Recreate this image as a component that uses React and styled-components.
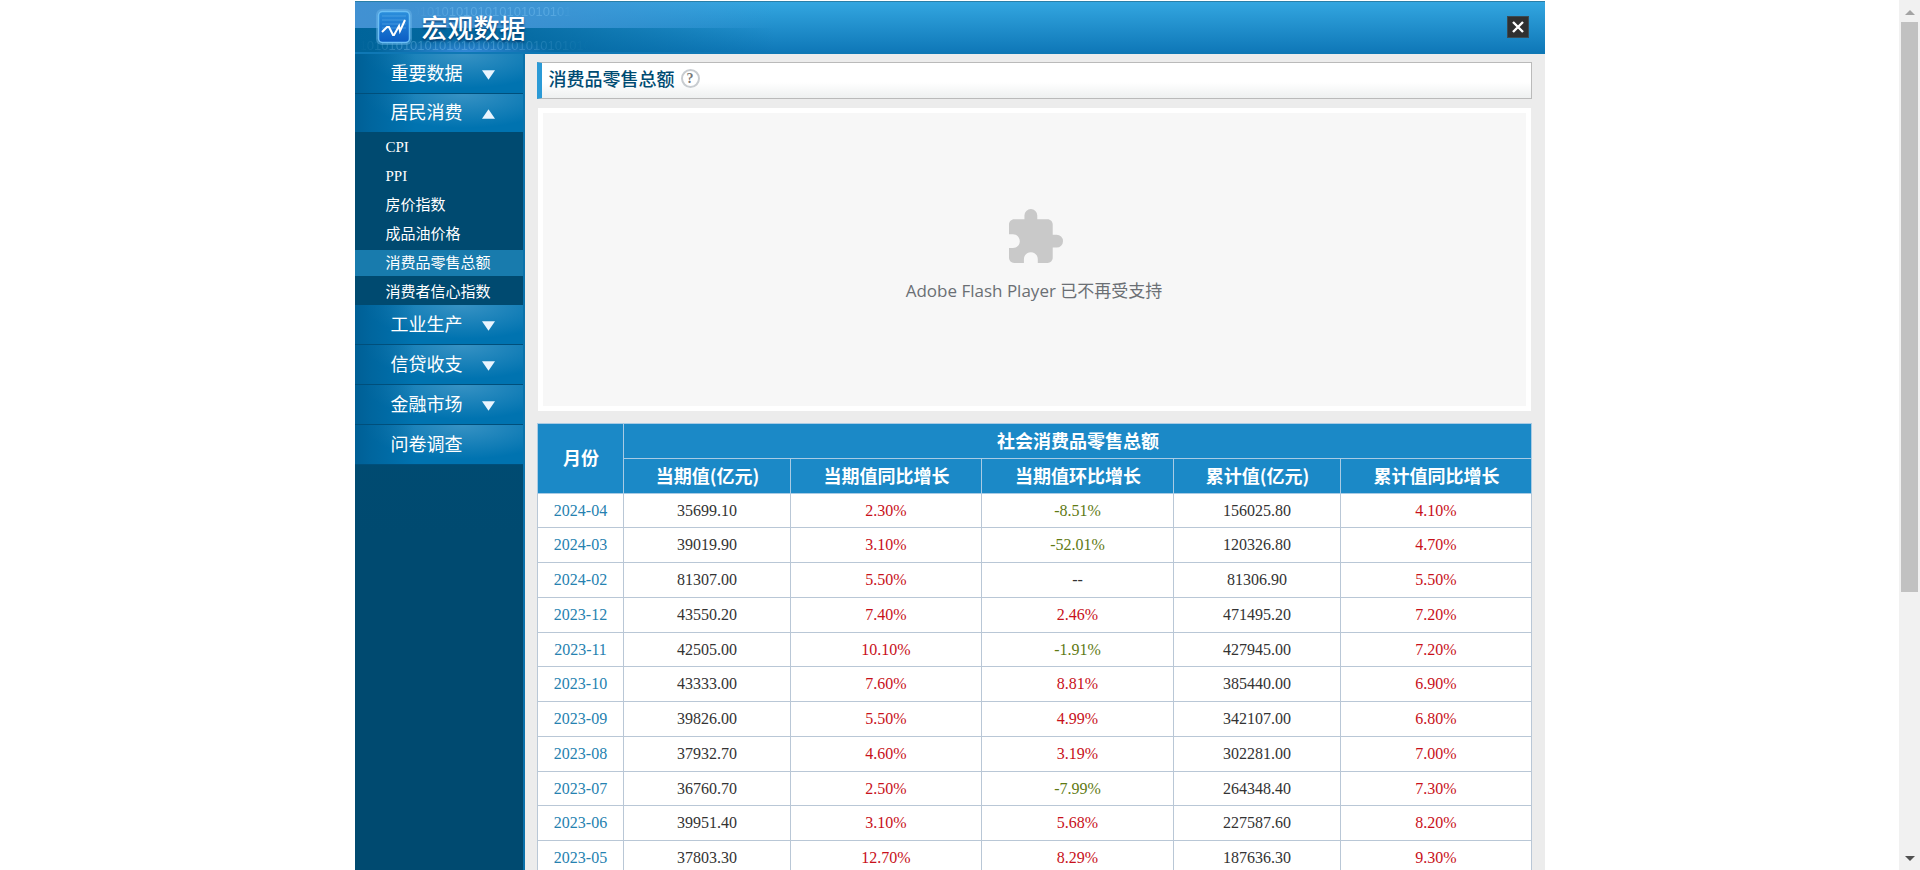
import React from "react";
import styled, { createGlobalStyle, css } from "styled-components";

const Global = createGlobalStyle`
  * { box-sizing: border-box; }
  body {
    margin: 0;
    background: #fff;
    font-family: "Liberation Serif", "Noto Sans CJK SC", serif;
    overflow: hidden;
  }
`;

const Window = styled.div`
  display: flex;
  height: 100vh;
`;

const Viewport = styled.div`
  flex: 1;
  min-width: 0;
  overflow: hidden;
`;

const Page = styled.div`
  display: flex;
  flex-direction: column;
  max-width: 1190px;
  min-height: 100%;
  margin: 0 auto;
  padding-top: 1px;
`;

const Header = styled.header`
  display: flex;
  align-items: center;
  justify-content: space-between;
  height: 53px;
  padding: 0 16px 0 20px;
  border-top: 1px solid #2a7fa8;
  border-bottom: 2px solid #0f78b5;
  background:
    radial-gradient(ellipse 90px 14px at 110px 100%, #3588d8, transparent),
    linear-gradient(90deg, #00649a 0, rgba(0, 100, 154, 0.8) 160px, transparent 420px) 0 26px / 100% 30px no-repeat,
    linear-gradient(90deg, #4191d2 0, rgba(65, 145, 210, 0.8) 180px, transparent 420px) 0 0 / 100% 26px no-repeat,
    linear-gradient(#33a6e0, #0f78b8);
`;

const Brand = styled.div`
  position: relative;
  display: flex;
  align-items: center;
  gap: 9px;
  height: 100%;
`;

const Digits = styled.div`
  position: absolute;
  left: ${(p) => (p.$upper ? "38px" : "-15px")};
  ${(p) => (p.$upper ? "top: 4px;" : "bottom: 0;")}
  font: 13px/12px "Liberation Sans", sans-serif;
  white-space: nowrap;
  color: rgba(150, 215, 255, 0.3);
  mask-image: linear-gradient(90deg, transparent, #000 40px, #000 140px, transparent);
`;

const Logo = styled.svg`
  position: relative;
  width: 38px;
  height: 38px;
`;

const SiteName = styled.h1`
  position: relative;
  margin: 0;
  font: 500 26px/26px "Noto Sans CJK SC", sans-serif;
  color: #fff;
  text-shadow: 0 2px 2px rgba(0, 40, 90, 0.6);
`;

const CloseButton = styled.button`
  display: flex;
  align-items: center;
  justify-content: center;
  width: 22px;
  height: 22px;
  padding: 0;
  border: 1px solid #3b4a52;
  background: #303030;
`;

const Body = styled.div`
  display: flex;
  flex: 1;
`;

const Sidebar = styled.nav`
  flex: 0 0 170px;
  border-right: 2px solid #0b72ab;
  background: linear-gradient(#00507a, #004a70 480px);
`;

const NavButton = styled.button`
  display: flex;
  align-items: center;
  gap: 19px;
  width: 100%;
  height: ${(p) => (p.$open ? "38px" : "40px")};
  padding: 0 0 4px 36px;
  border: 0;
  border-bottom: ${(p) => (p.$open ? "0" : "1px solid #004f7b")};
  background:
    linear-gradient(90deg, #005f95 0, rgba(0, 95, 149, 0.7) 14px, transparent 60px),
    radial-gradient(ellipse 100px 34px at 64% 0, #3792c4, #0073b0);
  color: #fff;
  font: 18px/24px "Noto Sans CJK SC", sans-serif;
  text-align: left;
`;

const Triangle = styled.svg`
  width: 13px;
  height: 10px;
  margin-top: 6px;
  fill: #eaf5ff;
`;

const SubMenu = styled.ul`
  margin: 0;
  padding: 2px 0 0;
  list-style: none;
  background: #004a70;
`;

const SubItem = styled.li`
  height: 29px;
  &:last-child { height: 26px; }
`;

const SubLink = styled.a`
  display: block;
  height: 26px;
  padding-left: 31px;
  font: 15px/26px "Liberation Serif", "Noto Sans CJK SC", serif;
  color: #fff;
  text-decoration: none;
  ${(p) => p.$active && css`background: #187bad;`}
`;

const Main = styled.main`
  flex: 1;
  min-width: 0;
  padding: 8px 13px 0 12px;
  background: #ececec;
`;

const TitleBar = styled.div`
  display: flex;
  align-items: center;
  gap: 6px;
  height: 37px;
  margin-bottom: 9px;
  padding: 0 0 5px 7px;
  border: 1px solid #bababa;
  border-left: 5px solid #2b9ad6;
  background: linear-gradient(#fff 55%, #eef0f0);
`;

const Title = styled.h2`
  margin: 0;
  font: 500 18px/26px "Noto Sans CJK SC", sans-serif;
  color: #004b72;
`;

const HelpButton = styled.button`
  width: 19px;
  height: 19px;
  padding: 0;
  border: 2px solid #c8ccd0;
  border-radius: 50%;
  background: #fff;
  color: #777;
  font: bold 14px/15px "Liberation Serif", serif;
`;

const Player = styled.section`
  display: flex;
  flex-direction: column;
  align-items: center;
  height: 303px;
  margin: 0 1px 12px;
  padding-top: 96px;
  border: 5px solid #fff;
  background: #f7f7f7;
`;

const Puzzle = styled.svg`
  width: 54px;
  height: 54px;
  margin-left: 4px;
  fill: #c9c9c9;
`;

const Notice = styled.p`
  margin: 15px 0 0;
  font: 17px/26px "Open Sans", "Noto Sans CJK SC", sans-serif;
  color: #6b6f74;
`;

const Table = styled.table`
  width: 100%;
  table-layout: fixed;
  border-collapse: collapse;
  background: #fff;
`;

const HeadCell = styled.th`
  height: 35px;
  padding: 0 0 3px 2px;
  border: 1px solid #a9cbe4;
  background: #1b89c7;
  color: #fff;
  font: bold 18px/24px "Noto Sans CJK SC", sans-serif;
`;

const Row = styled.tr`
  height: 35px;
  &:nth-child(4n + 1) { height: 34px; }
`;

const tones = { date: "#2581b0", plain: "#333", up: "#c8101a", down: "#5f7a14" };

const Cell = styled.td`
  padding: 0 0 0 1px;
  border: 1px solid #b9c7d6;
  color: ${(p) => tones[p.$tone]};
  font: 16px/20px "Liberation Serif", serif;
  text-align: center;
`;

const ScrollTrack = styled.div`
  display: flex;
  flex-direction: column;
  flex: 0 0 21px;
  align-items: center;
  background: #f1f1f1;
`;

const ScrollArrow = styled.svg`
  flex: none;
  width: 21px;
  height: 22px;
  fill: ${(p) => p.$fill};
`;

const Groove = styled.div`
  flex: 1;
  width: 17px;
`;

const Thumb = styled.div`
  height: 69%;
  background: #c1c1c1;
`;

const topics = ["CPI", "PPI", "房价指数", "成品油价格", "消费品零售总额", "消费者信心指数"];

const menu = [
  { label: "重要数据", arrow: "down" },
  { label: "居民消费", arrow: "up", children: topics },
  { label: "工业生产", arrow: "down" },
  { label: "信贷收支", arrow: "down" },
  { label: "金融市场", arrow: "down" },
  { label: "问卷调查" },
];

const rows = [
  ["2024-04", "35699.10", "2.30%", "-8.51%", "156025.80", "4.10%"],
  ["2024-03", "39019.90", "3.10%", "-52.01%", "120326.80", "4.70%"],
  ["2024-02", "81307.00", "5.50%", "--", "81306.90", "5.50%"],
  ["2023-12", "43550.20", "7.40%", "2.46%", "471495.20", "7.20%"],
  ["2023-11", "42505.00", "10.10%", "-1.91%", "427945.00", "7.20%"],
  ["2023-10", "43333.00", "7.60%", "8.81%", "385440.00", "6.90%"],
  ["2023-09", "39826.00", "5.50%", "4.99%", "342107.00", "6.80%"],
  ["2023-08", "37932.70", "4.60%", "3.19%", "302281.00", "7.00%"],
  ["2023-07", "36760.70", "2.50%", "-7.99%", "264348.40", "7.30%"],
  ["2023-06", "39951.40", "3.10%", "5.68%", "227587.60", "8.20%"],
  ["2023-05", "37803.30", "12.70%", "8.29%", "187636.30", "9.30%"],
];

const toneOf = (text, column) => {
  if (column === 0) return "date";
  if (!text.endsWith("%")) return "plain";
  return text.startsWith("-") ? "down" : "up";
};

const BrandLogo = () => (
  <Logo viewBox="0 0 38 38" aria-hidden="true">
    <defs>
      <linearGradient id="tile" x1="0" y1="0" x2="0" y2="1">
        <stop offset="0" stopColor="#2b8fdc" />
        <stop offset="1" stopColor="#0a5cc4" />
      </linearGradient>
    </defs>
    <rect x="1" y="1" width="36" height="36" rx="6" fill="#6fb7ea" opacity="0.45" />
    <rect x="3.5" y="3.5" width="31" height="31" rx="4" fill="url(#tile)" stroke="#6cc0f5" strokeWidth="1.5" />
    <path d="M7 8h24M7 12h24M7 16h24M7 20h24" stroke="#66b4ea" strokeWidth="1" opacity="0.5" />
    <path d="M7 24l5-5h2l4 8h1l5-9 1 5 5-11" fill="none" stroke="#fff" strokeWidth="2" />
  </Logo>
);

export default function App() {
  return (
    <>
      <Global />
      <Window>
        <Viewport>
          <Page>
            <Header>
              <Brand>
                <Digits $upper aria-hidden="true">0101010101010101010101</Digits>
                <Digits aria-hidden="true">10101010101010101010101010101010</Digits>
                <BrandLogo />
                <SiteName>宏观数据</SiteName>
              </Brand>
              <CloseButton aria-label="关闭">
                <svg width="14" height="14" viewBox="0 0 14 14" aria-hidden="true">
                  <path d="M2 2l10 10M12 2L2 12" stroke="#fff" strokeWidth="2.4" />
                </svg>
              </CloseButton>
            </Header>
            <Body>
              <Sidebar>
                {menu.map((group) => (
                  <React.Fragment key={group.label}>
                    <NavButton $open={Boolean(group.children)}>
                      {group.label}
                      {group.arrow && (
                        <Triangle viewBox="0 0 14 10" aria-hidden="true">
                          <path d={group.arrow === "up" ? "M0 10L7 0l7 10z" : "M0 0h14L7 10z"} />
                        </Triangle>
                      )}
                    </NavButton>
                    {group.children && (
                      <SubMenu>
                        {group.children.map((name) => (
                          <SubItem key={name}>
                            <SubLink href="#" $active={name === "消费品零售总额"}>{name}</SubLink>
                          </SubItem>
                        ))}
                      </SubMenu>
                    )}
                  </React.Fragment>
                ))}
              </Sidebar>
              <Main>
                <TitleBar>
                  <Title>消费品零售总额</Title>
                  <HelpButton aria-label="帮助">?</HelpButton>
                </TitleBar>
                <Player>
                  <Puzzle viewBox="2 1 21 21" aria-hidden="true">
                    <path d="M20.5 11H19V7c0-1.1-.9-2-2-2h-4V3.500a2.500 2.500 0 0 0-5 0V5H4c-1.100 0-2 .9-2 2v3.800h1.500c1.490 0 2.700 1.210 2.700 2.700s-1.210 2.700-2.700 2.700H2V20c0 1.100.9 2 2 2h3.800v-1.500c0-1.490 1.210-2.700 2.700-2.700s2.700 1.210 2.700 2.700V22H17c1.100 0 2-.9 2-2v-4h1.500a2.500 2.500 0 0 0 0-5z" />
                  </Puzzle>
                  <Notice>Adobe Flash Player 已不再受支持</Notice>
                </Player>
                <Table>
                  <colgroup>
                    <col width="86" />
                    <col width="167" />
                    <col width="191" />
                    <col width="192" />
                    <col width="167" />
                    <col width="191" />
                  </colgroup>
                  <thead>
                    <tr>
                      <HeadCell rowSpan={2}>月份</HeadCell>
                      <HeadCell colSpan={5}>社会消费品零售总额</HeadCell>
                    </tr>
                    <tr>
                      <HeadCell>当期值(亿元)</HeadCell>
                      <HeadCell>当期值同比增长</HeadCell>
                      <HeadCell>当期值环比增长</HeadCell>
                      <HeadCell>累计值(亿元)</HeadCell>
                      <HeadCell>累计值同比增长</HeadCell>
                    </tr>
                  </thead>
                  <tbody>
                    {rows.map((row) => (
                      <Row key={row[0]}>
                        {row.map((text, column) => (
                          <Cell key={column} $tone={toneOf(text, column)}>{text}</Cell>
                        ))}
                      </Row>
                    ))}
                  </tbody>
                </Table>
              </Main>
            </Body>
          </Page>
        </Viewport>
        <ScrollTrack>
          <ScrollArrow viewBox="0 0 21 22" $fill="#a3a3a3" aria-hidden="true"><path d="M6 15l5-5 5 5z" /></ScrollArrow>
          <Groove><Thumb /></Groove>
          <ScrollArrow viewBox="0 0 21 22" $fill="#505050" aria-hidden="true"><path d="M6 8l5 5 5-5z" /></ScrollArrow>
        </ScrollTrack>
      </Window>
    </>
  );
}
